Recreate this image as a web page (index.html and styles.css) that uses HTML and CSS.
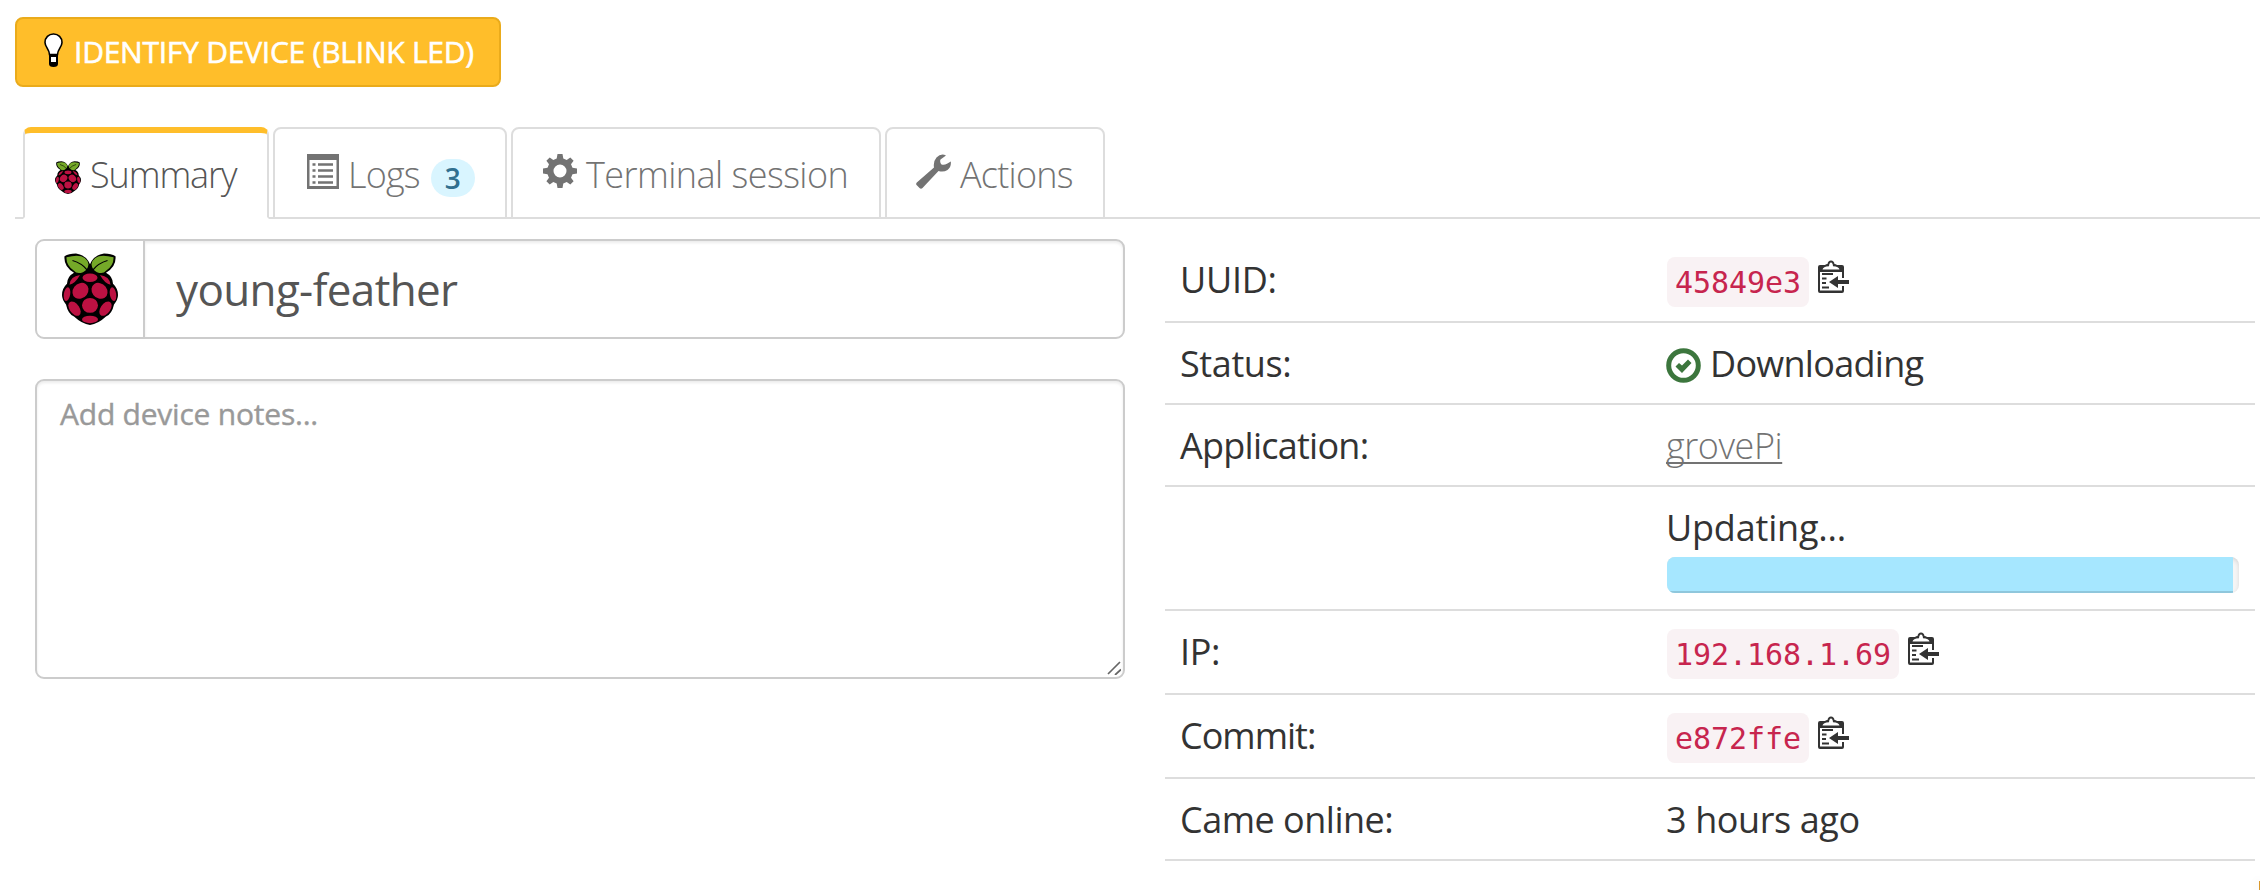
FILE: index.html
```html
<!DOCTYPE html>
<html lang="en">
<head>
<meta charset="utf-8">
<title>young-feather</title>
<link rel="stylesheet" href="styles.css">
</head>
<body>
<svg class="defs" aria-hidden="true">
  <symbol id="berry" viewBox="0 0 56 77" preserveAspectRatio="none">
    <path fill="#000" d="M28 12 Q24 2 14 .5 Q6 .5 2.500 3.500 Q1.500 15 12 21 Q5 25 5 33 Q0 38 0 45 Q0 50 4 55 Q6 65 12 68 Q20 76 28 77 Q36 76 44 68 Q50 65 52 55 Q56 50 56 45 Q56 38 51 33 Q51 25 44 21 Q54.500 15 53.500 3.500 Q50 .5 42 .5 Q32 2 28 12Z"/>
    <path fill="#75a928" d="M4.500 4.500 Q24 -1 26.500 12 Q26 18 21 20.500 Q15 23 12 19 Q4 13 4.500 4.500ZM51.500 4.500 Q32 -1 29.500 12 Q30 18 35 20.500 Q41 23 44 19 Q52 13 51.500 4.500Z"/>
    <path fill="none" stroke="#000" stroke-width="1.300" d="M10.500 8 Q20 11 25 18M45.500 8 Q36 11 31 18"/>
    <g fill="#bc1142">
      <ellipse cx="28" cy="26.500" rx="7.500" ry="4.500"/>
      <path d="M18 23.500 Q8 25 7.500 34 Q13 33 18 23.500ZM38 23.500 Q48 25 48.500 34 Q43 33 38 23.500Z"/>
      <ellipse cx="18.500" cy="40.500" rx="7.500" ry="9" transform="rotate(35 18.500 40.500)"/>
      <ellipse cx="37.500" cy="40.500" rx="7.500" ry="9" transform="rotate(-35 37.500 40.500)"/>
      <ellipse cx="5" cy="44" rx="3.200" ry="7.500" transform="rotate(8 5 44)"/>
      <ellipse cx="51" cy="44" rx="3.200" ry="7.500" transform="rotate(-8 51 44)"/>
      <ellipse cx="28" cy="56" rx="8" ry="8"/>
      <ellipse cx="12.500" cy="59.500" rx="5" ry="8.500" transform="rotate(-32 12.500 59.500)"/>
      <ellipse cx="43.500" cy="59.500" rx="5" ry="8.500" transform="rotate(32 43.500 59.500)"/>
      <ellipse cx="28" cy="71" rx="8" ry="4"/>
    </g>
  </symbol>
  <symbol id="paste" viewBox="0 0 31 33">
    <path fill="#333" d="M2 5 H7 Q8 4 9.500 4 Q10 .5 13 .5 Q16 .5 16.500 4 Q18 4 19 5 H24 Q26 5 26 7 V18 H24 V12 H2 V30.500 H24 V26 H26 V31 Q26 33 24 33 H2 Q0 33 0 31 V7 Q0 5 2 5Z"/>
    <path fill="#fff" d="M4.500 9.500 Q5 6.500 11 6.200 Q11.300 2.500 13 2.500 Q14.700 2.500 15 6.200 Q21 6.500 21.500 9.500Z"/>
    <path stroke="#333" stroke-width="2" d="M4 14H15M4 18.500H8.500M4 23H8M4 27.500H11"/>
    <path fill="#333" d="M11 22 L20 16 V20 H31 V24 H20 V28Z"/>
  </symbol>
</svg>

<main class="page">
  <button class="identify" type="button">
    <svg class="bulb" viewBox="0 0 19 34">
      <path d="M9.500 1 A8.300 8.300 0 0 1 18 9.500 C18 14 13.500 16.500 13.500 21.500 H5.500 C5.500 16.500 1 14 1 9.500 A8.300 8.300 0 0 1 9.500 1Z" fill="#fff" stroke="#000" stroke-width="1.600"/>
      <path d="M5 21H14V31Q14 34 9.500 34Q5 34 5 31Z" fill="#000"/>
      <path d="M7 24H12V29H7Z" fill="#fff"/>
    </svg>
    <span class="identify-text">IDENTIFY DEVICE (BLINK LED)</span>
  </button>

  <nav class="tabs">
    <a class="tab tab-summary"><svg class="berry-small"><use href="#berry"/></svg><span class="summary-text">Summary</span></a>
    <a class="tab tab-logs">
      <svg class="list-icon" viewBox="0 0 32 35"><path fill="#737373" fill-rule="evenodd" d="M0 0H32V35H0ZM2.500 6V32H29.500V6Z"/><path stroke="#737373" stroke-width="2.500" d="M5.500 10.500H8.500M11 10.500H26M5.500 16.500H8.500M11 16.500H26M5.500 22.500H8.500M11 22.500H26M5.500 28.500H8.500M11 28.500H26"/></svg>
      <span class="logs-text">Logs</span><span class="badge">3</span>
    </a>
    <a class="tab tab-terminal">
      <svg class="gear" viewBox="0 0 34 34"><path fill="#737373" fill-rule="evenodd" d="M14.500 0H19.500L20.300 4.500L23.700 6L27.300 3.400L30.600 6.700L28 10.300L29.500 13.700L34 14.500V19.500L29.500 20.300L28 23.700L30.600 27.300L27.300 30.600L23.700 28L20.300 29.500L19.500 34H14.500L13.700 29.500L10.300 28L6.700 30.600L3.400 27.300L6 23.700L4.500 20.300L0 19.500V14.500L4.500 13.700L6 10.300L3.400 6.700L6.700 3.400L10.300 6L13.700 4.500ZM17 10.500A6.500 6.500 0 1 0 17 23.500A6.500 6.500 0 1 0 17 10.500Z"/></svg>
      <span class="terminal-text">Terminal session</span>
    </a>
    <a class="tab tab-actions">
      <svg class="wrench" viewBox="0 0 35 35"><path fill="#737373" d="M30 1.500 L24.500 5.500 Q23.500 8 25.500 10.500 Q28 11.500 31 9.800 L34.800 7.500 Q35.500 13 31.500 16 Q27.500 18.500 22.500 17 L6.500 34 Q5 35.500 3.500 34 L.8 31.300 Q-.5 30 .8 28.500 L18 13.500 Q17 7.500 20.500 3.500 Q25 -1 30 1.500Z"/></svg>
      <span class="actions-text">Actions</span>
    </a>
  </nav>

  <div class="content">
    <section class="left">
      <div class="name-group">
        <div class="addon"><svg class="berry-large"><use href="#berry"/></svg></div>
        <div class="name-input"><span class="name-text">young-feather</span></div>
      </div>
      <div class="notes">
        <span class="notes-text">Add device notes...</span>
        <svg class="grip" viewBox="0 0 14 14"><path d="M1 13L13 1M8 14L14 8.500" stroke="#666" stroke-width="1.700"/></svg>
      </div>
    </section>
    <section class="details">
      <div class="row tall"><span class="label"><span class="t-uuid">UUID:</span></span><div class="value"><code>45849e3</code><svg class="paste"><use href="#paste"/></svg></div></div>
      <div class="row"><span class="label"><span class="t-status">Status:</span></span><div class="value">
        <svg class="check" viewBox="0 0 35 35"><circle cx="17.500" cy="17.500" r="14.800" fill="none" stroke="#3c763d" stroke-width="5"/><path fill="#3c763d" d="M9.500 18.500L13 15L16 17.500L22 11.500L25.500 15L16 25Z"/></svg>
        <span class="t-down">Downloading</span></div></div>
      <div class="row"><span class="label"><span class="t-app">Application:</span></span><div class="value"><a class="app-link">grovePi</a></div></div>
      <div class="row update"><span class="label"></span><div class="value stacked"><span class="t-upd">Updating...</span><div class="progress"><div class="bar"></div></div></div></div>
      <div class="row tall"><span class="label"><span class="t-ip">IP:</span></span><div class="value"><code>192.168.1.69</code><svg class="paste"><use href="#paste"/></svg></div></div>
      <div class="row tall"><span class="label"><span class="t-commit">Commit:</span></span><div class="value"><code>e872ffe</code><svg class="paste"><use href="#paste"/></svg></div></div>
      <div class="row"><span class="label"><span class="t-came">Came online:</span></span><div class="value"><span class="t-ago">3 hours ago</span></div></div>
    </section>
  </div>
</main>
<div class="corner"></div>
</body>
</html>
```
FILE: styles.css
```css
* { box-sizing: border-box; }
body {
  position: relative;
  margin: 0;
  height: 890px;
  overflow: hidden;
  background: #fff;
  color: #333;
  font-family: "Open Sans", "Noto Sans", sans-serif;
  font-size: 36px;
  line-height: 50px;
}
svg { display: block; flex: none; }
span, a, code { white-space: nowrap; }
.defs { position: absolute; width: 0; height: 0; }
.page { padding: 17px 0 0 15px; }
.identify {
  display: flex;
  align-items: center;
  width: 486px;
  height: 70px;
  padding: 0 0 0 27px;
  border: 2px solid #eaab1b;
  border-radius: 8px;
  background: #ffbe2a;
  color: #fff;
  font: 500 30px/40px "Open Sans", sans-serif;
}
.bulb { width: 19px; height: 34px; margin: -4px 11px 0 0; }
.identify-text { letter-spacing: -0.24px; -webkit-text-stroke: 0.6px #fff; }
.tabs {
  display: flex;
  gap: 4px;
  height: 92px;
  margin-top: 40px;
  padding-left: 8px;
  border-bottom: 2px solid #ddd;
}
.tab {
  display: flex;
  align-items: center;
  height: 92px;
  padding-top: 3px;
  border: 2px solid #ddd;
  border-radius: 8px 8px 0 0;
  color: #737373;
  font-weight: 300;
}
.tab-summary {
  width: 246px;
  padding: 0 0 1px 30px;
  border-top: 6px solid #ffbe2a;
  border-bottom-color: #fff;
  color: #555;
}
.berry-small { width: 26px; height: 33px; margin: 5px 9px 0 0; }
.summary-text { letter-spacing: -1.1px; }
.tab-logs { width: 234px; padding-left: 32px; }
.list-icon { width: 32px; height: 35px; margin: -7px 9px 0 0; }
.logs-text { letter-spacing: -0.8px; }
.badge {
  width: 44px;
  height: 38px;
  margin: 6px 0 0 11px;
  border-radius: 19px;
  background: #d9f5ff;
  color: #31708f;
  font-weight: 600;
  font-size: 28px;
  line-height: 38px;
  text-align: center;
}
.tab-terminal { width: 370px; padding-left: 30px; }
.gear { width: 34px; height: 34px; margin: -7px 9px 0 0; }
.terminal-text { letter-spacing: -0.55px; }
.tab-actions { width: 220px; padding-left: 29px; }
.wrench { width: 35px; height: 35px; margin: -7px 9px 0 0; }
.actions-text { letter-spacing: -0.75px; }
.content { display: flex; gap: 40px; padding: 20px 5px 0 20px; }
.left { display: flex; flex-direction: column; gap: 40px; width: 1090px; }
.name-group {
  display: flex;
  height: 100px;
  border: 2px solid #ccc;
  border-radius: 9px;
}
.addon {
  display: flex;
  align-items: center;
  justify-content: center;
  width: 108px;
  border-right: 2px solid #ccc;
}
.berry-large { width: 56px; height: 72px; }
.name-input {
  display: flex;
  flex: 1;
  align-items: center;
  padding-left: 31px;
  border-radius: 0 7px 7px 0;
  box-shadow: inset 0 2px 3px rgba(0, 0, 0, .08);
  color: #555;
  font-size: 44px;
}
.name-text { letter-spacing: -0.65px; }
.notes {
  position: relative;
  height: 300px;
  padding: 8px 23px;
  border: 2px solid #ccc;
  border-radius: 9px;
  box-shadow: inset 0 2px 3px rgba(0, 0, 0, .08);
  color: #999;
  font-size: 30px;
}
.notes-text { letter-spacing: -0.22px; -webkit-text-stroke: 0.4px #999; }
.grip { position: absolute; right: 2px; bottom: 2px; width: 14px; height: 14px; }
.details { width: 1090px; }
.row {
  display: flex;
  height: 82px;
  padding: 16px 15px 0;
  border-bottom: 2px solid #ddd;
}
.tall { height: 84px; }
.update { height: 124px; }
.label { width: 487px; }
.value { display: flex; flex: 1; align-items: flex-start; }
.stacked { flex-direction: column; }
.t-uuid, .t-ip { letter-spacing: -0.3px; }
.t-status { letter-spacing: -0.4px; }
.t-app { letter-spacing: -0.75px; }
.t-commit { letter-spacing: -1px; }
.t-came { letter-spacing: -0.5px; }
.t-down { letter-spacing: -0.72px; }
.t-upd { margin-left: -1px; letter-spacing: -0.2px; }
.t-ago { margin-left: -1px; letter-spacing: -0.4px; }
code {
  height: 50px;
  margin-top: 2px;
  padding: 1px 8px 0;
  border-radius: 8px;
  background: #f9f2f4;
  color: #c7254e;
  font: 30px/50px "DejaVu Sans Mono", monospace;
  letter-spacing: -0.06px;
}
.paste { width: 31px; height: 33px; margin: 5px 0 0 9px; }
.check { width: 35px; height: 35px; margin: 9px 9px 0 -1px; }
.app-link {
  margin-left: -1px;
  color: #737373;
  font-weight: 300;
  letter-spacing: -0.45px;
  text-decoration: underline;
  text-decoration-thickness: 2px;
  text-underline-offset: 3px;
  text-decoration-skip-ink: none;
}
.progress {
  width: 572px;
  height: 36px;
  margin-top: 4px;
  overflow: hidden;
  border-radius: 8px;
  background: #f5f5f5;
  box-shadow: inset 0 2px 4px rgba(0, 0, 0, .12);
}
.bar {
  width: 566px;
  height: 36px;
  background: #a6e7ff;
  box-shadow: inset 0 -2px 0 #8fc7dc;
}
/* edge of the floating button that peeks in at the bottom right */
.corner {
  position: absolute;
  right: 0;
  bottom: 0;
  width: 1px;
  height: 9px;
  background: #d9982b;
  box-shadow: 0 0 10px rgba(0, 0, 0, .25);
}
```
